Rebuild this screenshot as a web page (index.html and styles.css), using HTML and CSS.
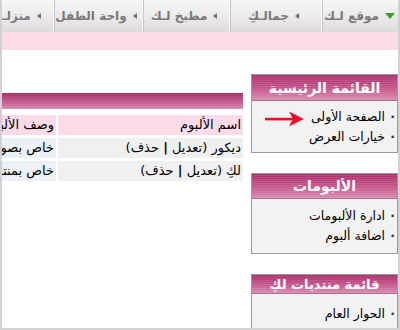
FILE: index.html
```html
<!DOCTYPE html>
<html lang="ar" dir="rtl">
<head>
<meta charset="utf-8">
<title>ألبوماتي</title>
<link rel="stylesheet" href="styles.css">
</head>
<body>
<div class="frame">
  <nav class="tabs">
    <a class="tab tab-1 is-active"><span class="tri tri-down"></span>موقع لـك</a>
    <a class="tab tab-2"><span class="tri tri-left"></span>جمالـكِ</a>
    <a class="tab tab-3"><span class="tri tri-left"></span>مطبخ لـك</a>
    <a class="tab tab-4"><span class="tri tri-left"></span>واحة الطفل</a>
    <a class="tab tab-5"><span class="tri tri-left"></span>منزلـك</a>
  </nav>
  <div class="pinkbar"></div>
  <div class="main">
    <aside class="sidebar">
      <section class="box">
        <h3 class="box-head head-tall">القائمة الرئيسية</h3>
        <ul class="box-list">
          <li>الصفحة الأولى</li>
          <li>خيارات العرض</li>
        </ul>
      </section>
      <section class="box">
        <h3 class="box-head head-mid">الألبومات</h3>
        <ul class="box-list list-roomy">
          <li>ادارة الألبومات</li>
          <li>اضافة ألبوم</li>
        </ul>
      </section>
      <section class="box box-open">
        <h3 class="box-head head-short">قائمة منتديات لكِ</h3>
        <ul class="box-list list-open">
          <li>الحوار العام</li>
        </ul>
      </section>
    </aside>
    <div class="content">
      <div class="titlebar"></div>
      <table class="albums">
        <tr class="row-head">
          <td class="c-name">اسم الألبوم</td>
          <td class="c-desc">وصف الألبوم</td>
        </tr>
        <tr>
          <td class="c-name">ديكور (<a>تعديل</a> <b>|</b> <a>حذف</a>)</td>
          <td class="c-desc">خاص بصور الديكور</td>
        </tr>
        <tr>
          <td class="c-name">لكِ (<a>تعديل</a> <b>|</b> <a>حذف</a>)</td>
          <td class="c-desc">خاص بمنتديات لكِ</td>
        </tr>
      </table>
    </div>
  </div>
  <svg class="pointer" width="44" height="20" viewBox="0 0 44 20" aria-hidden="true">
    <rect x="2" y="7.8" width="28" height="2.6" fill="#e8102a"/>
    <polygon points="41,9 26,1.5 30,9 26,16.5" fill="#e8102a"/>
  </svg>
</div>
</body>
</html>
```

FILE: styles.css
```css
* { box-sizing: border-box; }

html, body {
  margin: 0;
  padding: 0;
  background: #ffffff;
}

body {
  font-family: "DejaVu Sans", sans-serif;
  font-size: 13px;
  color: #000;
}

.frame {
  position: relative;
  width: 400px;
  height: 330px;
  overflow: hidden;
  border-left: 2px solid #d2d2d2;
  border-right: 2px solid #d2d2d2;
  border-bottom: 2px solid #d2d2d2;
}

/* tabs */
.tabs {
  display: flex;
  height: 32px;
  background: linear-gradient(#f7f7f7, #e9e9e9 60%, #dedede);
  border-bottom: 1px solid #d8d8d8;
}

.tab {
  display: flex;
  align-items: center;
  justify-content: center;
  gap: 6px;
  flex: none;
  height: 100%;
  padding-right: 6px;
  border-left: 1px solid #c6c6c6;
  box-shadow: inset -1px 0 0 #fafafa;
  font-size: 12px;
  font-weight: bold;
  color: #7a7a7a;
  white-space: nowrap;
}

.tab-1 { width: 76px; box-shadow: none; padding-right: 2px; }
.tab-2 { width: 92px; }
.tab-3 { width: 87px; }
.tab-4 { width: 89px; }
.tab-5 { width: 70px; border-left: 0; }

.tri {
  display: inline-block;
  width: 0;
  height: 0;
}

.tri-down {
  border-left: 5px solid transparent;
  border-right: 5px solid transparent;
  border-top: 6px solid #3f9f1f;
}

.tri-left {
  border-top: 3.5px solid transparent;
  border-bottom: 3.5px solid transparent;
  border-right: 4px solid #6e6e6e;
}

.pinkbar {
  height: 18px;
  background: #fcdbe9;
}

/* main */
.main {
  display: flex;
  gap: 8px;
  align-items: flex-start;
}

.sidebar {
  flex: none;
  width: 147px;
  padding-top: 24px;
  display: flex;
  flex-direction: column;
  gap: 20px;
}

.box {
  border: 1px solid #9a9a9a;
  background: #f2f2f2;
}

.box-head {
  margin: 0;
  color: #fff;
  font-size: 14px;
  font-weight: bold;
  text-align: center;
  background:
    repeating-linear-gradient(to bottom, rgba(255,255,255,0) 0 1px, rgba(255,255,255,0.09) 1px 2px),
    linear-gradient(#ac2f6c, #c5588d 55%, #d98bb1);
}

.head-tall { height: 26px; line-height: 26px; border-bottom: 1px solid #b07090; }
.head-mid { height: 25px; line-height: 25px; border-bottom: 1px solid #b07090; }
.head-short { height: 19px; line-height: 19px; border-bottom: 1px solid #b07090; font-size: 13px; }

.box-list {
  list-style: none;
  margin: 0;
  padding: 6px 2px 5px 0;
  font-size: 12.5px;
}

.list-roomy { padding-top: 7px; padding-bottom: 7px; }
.list-open { padding-top: 10px; padding-bottom: 40px; }

.box-list li {
  line-height: 20px;
  white-space: nowrap;
}

.box-list li::before {
  content: "·";
  display: inline-block;
  width: 10px;
  font-weight: bold;
  color: #333;
}

/* content */
.content {
  flex: 1;
  min-width: 0;
  overflow: hidden;
  padding-top: 43px;
}

.titlebar {
  height: 16px;
  background:
    repeating-linear-gradient(to bottom, rgba(255,255,255,0) 0 1px, rgba(255,255,255,0.09) 1px 2px),
    linear-gradient(#a22c64, #c2558a 55%, #d889b0);
}

.albums {
  width: 400px;
  margin: 3px -2px 0 0;
  border-collapse: separate;
  border-spacing: 2px 3px;
}

.albums td {
  height: 20px;
  padding: 0 2px;
  line-height: 20px;
  white-space: nowrap;
  text-align: right;
  overflow: hidden;
}

.c-name {
  width: 185px;
  background: #f0f0f0;
}

.c-desc {
  background: #edf0f6;
}

.row-head td { background: #fcdbe9; }

.albums a { color: #000; text-decoration: none; }

.pointer {
  position: absolute;
  left: 261px;
  top: 110px;
}
```
